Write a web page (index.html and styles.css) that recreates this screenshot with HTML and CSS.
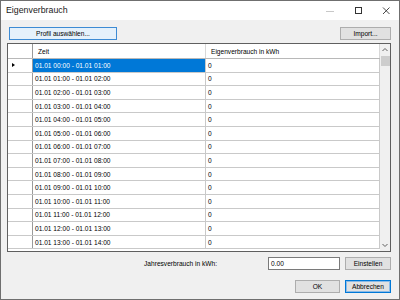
FILE: index.html
```html
<!DOCTYPE html>
<html lang="de">
<head>
  <meta charset="UTF-8" />
  <title>Eigenverbrauch</title>
  <link rel="stylesheet" href="styles.css">
</head>
<body>
  <div class="window">
    <div class="titlebar">
      <div class="title">Eigenverbrauch</div>
      <div class="caption-btns">
        <svg class="cap min" width="10" height="10" viewBox="0 0 10 10"><path d="M1 5.5h8" stroke="#c8c8c8" stroke-width="1"/></svg>
        <svg class="cap" width="10" height="10" viewBox="0 0 10 10"><rect x="2.5" y="1.5" width="6" height="6" fill="none" stroke="#333" stroke-width="1"/></svg>
        <svg class="cap" width="10" height="10" viewBox="0 0 10 10"><path d="M2 1.5l6.5 6.5M8.5 1.5L2 8" stroke="#333" stroke-width="0.9"/></svg>
      </div>
    </div>

    <div class="content">
      <div class="toolbar">
        <button class="btn btn-hover btn-profil">Profil auswählen...</button>
        <button class="btn btn-import">Import...</button>
      </div>

      <div class="grid">
        <div class="grid-body">
          <div class="row header">
            <div class="rowhead"></div>
            <div class="cell col-zeit">Zeit</div>
            <div class="cell col-val">Eigenverbrauch in kWh</div>
          </div>
          <div class="rows" id="rows"></div>
        </div>
        <div class="scrollbar">
          <svg class="arrow" width="10" height="8" viewBox="0 0 10 8"><path d="M2.5 5l2.5-2.5 2.5 2.5" fill="none" stroke="#606060" stroke-width="1"/></svg>
          <div class="thumb"></div>
          <div class="track"></div>
          <svg class="arrow" width="10" height="8" viewBox="0 0 10 8"><path d="M2.5 3l2.5 2.5 2.5-2.5" fill="none" stroke="#606060" stroke-width="1"/></svg>
        </div>
      </div>

      <div class="footer-row">
        <span class="label">Jahresverbrauch in kWh:</span>
        <div class="input">0.00</div>
        <button class="btn btn-small">Einstellen</button>
      </div>
      <div class="footer-row dialog-btns">
        <button class="btn btn-ok">OK</button>
        <button class="btn btn-small btn-default">Abbrechen</button>
      </div>
    </div>
  </div>

  <script>
    // Stundenwerte fuer die Tabelle erzeugen
    const rows = document.getElementById('rows');
    const pad = n => String(n).padStart(2, '0');
    for (let h = 0; h < 14; h++) {
      const row = document.createElement('div');
      row.className = 'row' + (h === 0 ? ' current' : '');
      row.innerHTML =
        '<div class="rowhead">' + (h === 0 ? '<span class="marker"></span>' : '') + '</div>' +
        '<div class="cell col-zeit">01.01 ' + pad(h) + ':00 - 01.01 ' + pad(h + 1) + ':00</div>' +
        '<div class="cell col-val">0</div>';
      rows.appendChild(row);
    }
  </script>
</body>
</html>
```

FILE: styles.css
```css
html, body {
  margin: 0;
  padding: 0;
}
body {
  width: 400px;
  height: 300px;
  overflow: hidden;
  font-family: "Liberation Sans", Arial, sans-serif;
  font-size: 6.6px;
  color: #000;
}
.window {
  width: 400px;
  height: 300px;
  box-sizing: border-box;
  border: 1px solid #6f6f6f;
  background: #f0f0f0;
  display: flex;
  flex-direction: column;
}
.titlebar {
  height: 19px;
  background: #fff;
  display: flex;
  align-items: center;
  justify-content: space-between;
  flex-shrink: 0;
}
.title {
  font-size: 8.8px;
  padding-left: 5px;
  padding-bottom: 1px;
  color: #1a1a1a;
}
.caption-btns {
  display: flex;
  align-items: center;
  gap: 18px;
  padding-right: 8px;
}
.cap {
  display: block;
}

.content {
  flex: 1;
  display: flex;
  flex-direction: column;
  padding: 7px 8px 0 6px;
}
.toolbar {
  display: flex;
  justify-content: space-between;
  padding-left: 2px;
}
.btn {
  font-family: inherit;
  font-size: 6.6px;
  height: 13px;
  padding: 0;
  margin: 0;
  background: #e1e1e1;
  border: 1px solid #adadad;
  color: #000;
  line-height: 11px;
  text-align: center;
}
.btn-hover {
  background: #e5f1fb;
  border-color: #3d8bd4;
}
.btn-profil {
  width: 108px;
}
.btn-import {
  width: 51px;
}
.btn-small {
  width: 46px;
}
.btn-ok {
  width: 45px;
}
.btn-default {
  border-color: #0078d7;
  box-shadow: inset 0 0 0 1px #8cbbe6;
}

/* Tabelle */
.grid {
  margin-top: 3px;
  height: 209px;
  box-sizing: border-box;
  border: 1px solid #5f5f5f;
  background: #fff;
  display: flex;
  overflow: hidden;
}
.grid-body {
  flex: 1;
  overflow: hidden;
}
.row {
  display: flex;
  height: 13.6px;
  box-sizing: border-box;
  border-bottom: 1px solid #c9c9c9;
}
.row.header {
  height: 15px;
  border-bottom: 1px solid #b8b8b8;
}
.rowhead {
  width: 25px;
  flex-shrink: 0;
  border-right: 1px solid #9a9a9a;
  display: flex;
  align-items: center;
  padding-left: 4px;
  box-sizing: border-box;
}
.cell {
  display: flex;
  align-items: center;
  box-sizing: border-box;
  white-space: nowrap;
  overflow: hidden;
}
.col-zeit {
  width: 173px;
  padding-left: 2px;
  border-right: 1px solid #c9c9c9;
}
.col-val {
  flex: 1;
  padding-left: 2px;
  border-right: 1px solid #c9c9c9;
}
.header .col-zeit,
.header .col-val {
  padding-left: 5px;
  padding-top: 1px;
  border-right-color: #d8d8d8;
}
.row.current .col-zeit {
  background: #0078d7;
  color: #fff;
}
.marker {
  width: 0;
  height: 0;
  border-top: 2.5px solid transparent;
  border-bottom: 2.5px solid transparent;
  border-left: 3px solid #000;
}

.scrollbar {
  width: 10px;
  flex-shrink: 0;
  background: #f0f0f0;
  display: flex;
  flex-direction: column;
}
.arrow {
  display: block;
  height: 12px;
  width: 10px;
}
.thumb {
  height: 10px;
  background: #cdcdcd;
  margin: 0 0.5px;
}
.track {
  flex: 1;
}

/* Fusszeile */
.footer-row {
  display: flex;
  justify-content: flex-end;
  align-items: center;
  gap: 5px;
  margin-top: 5px;
}
.label {
  margin-right: 46px;
}
.input {
  width: 72px;
  height: 13px;
  box-sizing: border-box;
  background: #fff;
  border: 1px solid #7a7a7a;
  padding-left: 2px;
  line-height: 11px;
}
.dialog-btns {
  margin-top: 10px;
}
```
